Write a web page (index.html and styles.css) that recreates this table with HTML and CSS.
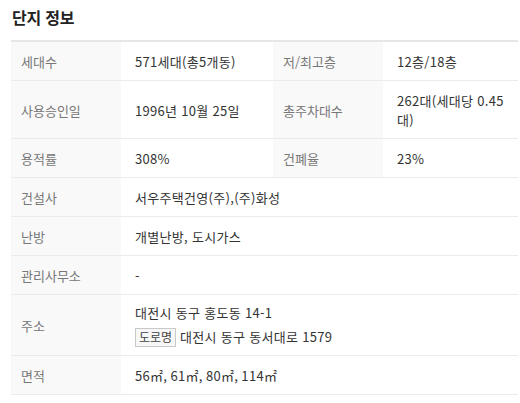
FILE: index.html
```html
<!DOCTYPE html>
<html lang="ko">
<head>
<meta charset="utf-8">
<link rel="stylesheet" href="styles.css">
</head>
<body>
<div class="wrap">
  <h2 class="title">단지 정보</h2>
  <table class="info">
    <colgroup>
      <col class="c-label"><col class="c-val"><col class="c-label"><col class="c-val2">
    </colgroup>
    <tr>
      <th>세대수</th><td>571세대(총5개동)</td>
      <th>저/최고층</th><td>12층/18층</td>
    </tr>
    <tr>
      <th>사용승인일</th><td>1996년 10월 25일</td>
      <th>총주차대수</th><td>262대(세대당 0.45대)</td>
    </tr>
    <tr>
      <th>용적률</th><td>308%</td>
      <th>건폐율</th><td>23%</td>
    </tr>
    <tr>
      <th>건설사</th><td colspan="3">서우주택건영(주),(주)화성</td>
    </tr>
    <tr>
      <th>난방</th><td colspan="3">개별난방, 도시가스</td>
    </tr>
    <tr>
      <th>관리사무소</th><td colspan="3">-</td>
    </tr>
    <tr>
      <th>주소</th>
      <td colspan="3" class="addr">
        <div class="line">대전시 동구 홍도동 14-1</div>
        <div class="line road"><span class="badge">도로명</span> 대전시 동구 동서대로 1579</div>
      </td>
    </tr>
    <tr>
      <th>면적</th><td colspan="3">56㎡, 61㎡, 80㎡, 114㎡</td>
    </tr>
  </table>
</div>
</body>
</html>
```
FILE: styles.css
```css
html, body {
  margin: 0;
  padding: 0;
  background: #fff;
}
body {
  font-family: "Noto Sans CJK KR", "Noto Sans", sans-serif;
  color: #333;
}
.wrap {
  padding: 0 2px 0 11px;
}
.title {
  margin: 0;
  padding: 5px 0 0 1px;
  height: 35px;
  box-sizing: border-box;
  font-size: 16px;
  line-height: 24px;
  font-weight: bold;
  color: #222;
  letter-spacing: -0.2px;
}
.info {
  width: 507px;
  border-collapse: collapse;
  table-layout: fixed;
  border-top: 2px solid #e6e6e6;
  margin-top: 5px;
  font-size: 13px;
  line-height: 19px;
}
.c-label { width: 110px; }
.c-val { width: 152px; }
.c-val2 { width: 135px; }
.info th, .info td {
  border-bottom: 1px solid #ebebeb;
  padding: 10px 10px 9px;
  text-align: left;
  vertical-align: middle;
}
.info th {
  background: #f9f9f9;
  color: #777;
  font-weight: normal;
}
.info td {
  padding-left: 14px;
  color: #333;
  letter-spacing: 0.3px;
}
.info td.addr {
  padding-top: 8px;
  padding-bottom: 8px;
}
.line.road {
  margin-top: 5px;
}
.badge {
  display: inline-block;
  box-sizing: border-box;
  height: 19px;
  padding: 0 3px;
  border: 1px solid #c9c9c9;
  background: #f7f7f7;
  font-size: 12px;
  line-height: 16px;
  color: #444;
  letter-spacing: 0;
  vertical-align: 0px;
}
```
